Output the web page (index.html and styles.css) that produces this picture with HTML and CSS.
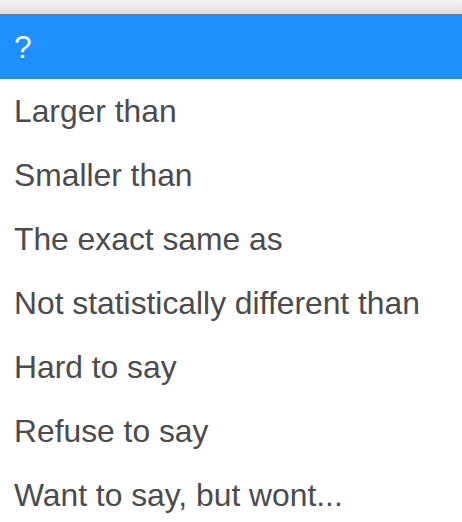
FILE: index.html
```html
<!DOCTYPE html>
<html lang="en">
<head>
    <meta charset="UTF-8">
    <meta name="viewport" content="width=device-width, initial-scale=1.0">
    <title>Select</title>
    <link rel="stylesheet" href="styles.css">
</head>
<body>

<div class="select-bar"></div>
<ul class="options">
    <li class="option selected">?</li>
    <li class="option">Larger than</li>
    <li class="option">Smaller than</li>
    <li class="option">The exact same as</li>
    <li class="option">Not statistically different than</li>
    <li class="option">Hard to say</li>
    <li class="option">Refuse to say</li>
    <li class="option">Want to say, but wont...</li>
</ul>

</body>
</html>
```

FILE: styles.css
```css
body {
    margin: 0;
    font-family: 'Liberation Sans', Arial, sans-serif;
    background: #fff;
    overflow: hidden;
}
.select-bar {
    height: 14px;
    background: linear-gradient(#f6f6f6, #dcdcdc);
    border-bottom: 1px solid #777;
}
.options {
    list-style: none;
    margin: 0;
    padding: 0;
}
.option {
    height: 64px;
    display: flex;
    align-items: center;
    padding-left: 14px;
    font-size: 31.8px;
    color: #4b4b4b;
    white-space: nowrap;
}
.option.selected {
    background-color: #1e90ff;
    color: #fff;
}
```
